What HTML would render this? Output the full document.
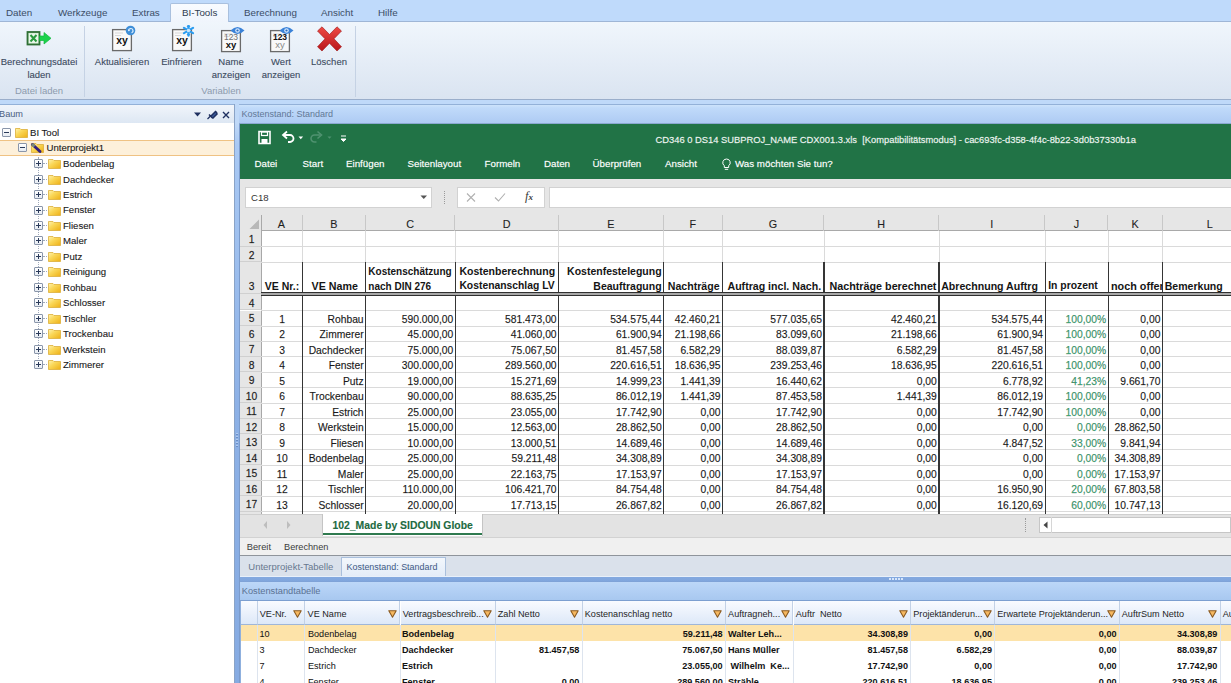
<!DOCTYPE html><html><head><meta charset="utf-8"><style>
*{box-sizing:border-box;margin:0;padding:0}
html,body{width:1231px;height:683px;overflow:hidden;background:#bfd9f9;font-family:"Liberation Sans",sans-serif;position:relative}
.a{position:absolute}
.t{position:absolute;white-space:nowrap;line-height:1}
#tabbar{left:0;top:0;width:1231px;height:22px;background:#bfdafb}
#tabbar .t{top:7.5px;font-size:9.8px;color:#3b4d66}
#seltab{left:170px;top:3px;width:59px;height:19px;background:linear-gradient(#f8fbff,#f0f5fc);border:1px solid #a9c0de;border-bottom:none;border-radius:2px 2px 0 0}
#ribbon{left:0;top:21px;width:1231px;height:79px;background:linear-gradient(#f0f6fc,#e4ecf6 55%,#dae4f1);border-top:1px solid #9fb6d6;border-bottom:1px solid #9aaecb}
.rl{position:absolute;font-size:9.5px;color:#3b4a5e;-webkit-text-stroke:0.2px rgba(59,74,94,0.5);text-align:center;white-space:nowrap;line-height:13px}
.gl{position:absolute;font-size:9.5px;color:#8d9bad;text-align:center;white-space:nowrap;line-height:1}
.vsep{position:absolute;width:1px;background:#c5d2e4;top:26px;height:71px}
.phdr{position:absolute;height:20px;border-top:1px solid #93b1d8;border-bottom:1px solid #8aa8d0}
.phdr .t{top:4.8px;font-size:9.2px}
#tree{left:0;top:123px;width:234px;height:560px;background:#fff}
.pm{position:absolute;width:9px;height:9px;border:1px solid #8a96aa;border-radius:1px;background:linear-gradient(#fff,#e6ebf2)}
.pm:before{content:"";position:absolute;left:1px;top:3px;width:5px;height:1px;background:#2a3a5a}
.pm.p:after{content:"";position:absolute;left:3px;top:1px;width:1px;height:5px;background:#2a3a5a}
.trt{position:absolute;white-space:nowrap;line-height:1;font-size:9.6px;color:#151515;-webkit-text-stroke:0.2px rgba(40,40,40,0.5)}
#xl{left:240px;top:124px;width:991px;height:55px;background:#217346}
#xl .t{color:#fff;-webkit-text-stroke:0.3px rgba(255,255,255,0.6)}
#fbar{left:240px;top:179px;width:991px;height:36px;background:#e6e6e6}
#grid{left:240px;top:215px;width:991px;height:299px;background:#fff;overflow:hidden}
.ch{position:absolute;top:0;height:16px;border-right:1px solid #c8c8c8;font-size:10.8px;color:#1e1e1e;-webkit-text-stroke:0.2px rgba(30,30,30,0.5);text-align:center;line-height:19px}
.rh{position:absolute;left:0;width:21.8px;background:#e6e6e6;border-right:1px solid #a8a8a8;border-bottom:1px solid #d0d0d0}
.gv{position:absolute;width:1px;background:#dadada}
.gh{position:absolute;height:1px;background:#dadada}
.tk{position:absolute;width:1.25px;background:#353535}
.c{position:absolute;white-space:nowrap;font-size:10.3px;color:#151515;line-height:1;-webkit-text-stroke:0.25px rgba(40,40,40,0.5)}
.hb{position:absolute;white-space:nowrap;font-size:10.8px;font-weight:bold;color:#151515;line-height:1}
#sheettabs{left:240px;top:514px;width:991px;height:24px;background:#e3e3e3;border-top:1px solid #cfcfcf;border-bottom:1px solid #d2d2d2}
#status{left:240px;top:538px;width:991px;height:18px;background:#f0f0f0;border-bottom:1px solid #8f949b}
#doctabs{left:240px;top:556px;width:991px;height:20px;background:#dae1eb}
#band2{left:240px;top:576px;width:991px;height:6px;background:linear-gradient(#e8f0fa 0,#e8f0fa 0.6px,#84a9df 1px,#80a6dd 5px,#7d9fd2 6px)}
#ktab{left:240px;top:582px;width:991px;height:19px;background:linear-gradient(#bcd7f8,#a8c8f0);border-bottom:1px solid #7c9fd0}
#bgrid{left:240px;top:601px;width:991px;height:82px;background:#fff;overflow:hidden}
.bh{position:absolute;top:0;height:24px;background:linear-gradient(#f9fbff,#dde8f8);border-right:1px solid #c2d1e6;border-bottom:1px solid #9fb6d8;font-size:9.1px;color:#1e1e1e}
.bc{position:absolute;white-space:nowrap;font-size:9.1px;color:#111;line-height:1}
</style></head><body>
<div id="tabbar" class="a">
<div class="t" style="left:6px">Daten</div>
<div class="t" style="left:58px">Werkzeuge</div>
<div class="t" style="left:132px">Extras</div>
<div class="t" style="left:244px">Berechnung</div>
<div class="t" style="left:321px">Ansicht</div>
<div class="t" style="left:378px">Hilfe</div>
</div>
<div id="ribbon" class="a"></div>
<div id="seltab" class="a"></div><div class="t" style="left:182px;top:7.5px;font-size:9.8px;color:#2f3d50">BI-Tools</div>
<div class="vsep" style="left:84px"></div><div class="vsep" style="left:355px"></div>
<div class="rl" style="left:-6.0px;top:54.5px;width:90px">Berechnungsdatei<br>laden</div>
<div class="rl" style="left:77.0px;top:54.5px;width:90px">Aktualisieren</div>
<div class="rl" style="left:136.5px;top:54.5px;width:90px">Einfrieren</div>
<div class="rl" style="left:186.0px;top:54.5px;width:90px">Name<br>anzeigen</div>
<div class="rl" style="left:236.0px;top:54.5px;width:90px">Wert<br>anzeigen</div>
<div class="rl" style="left:284.0px;top:54.5px;width:90px">Löschen</div>
<div class="gl" style="left:0;top:85.5px;width:78px">Datei laden</div>
<div class="gl" style="left:180px;top:85.5px;width:82px">Variablen</div>
<svg class="a" style="left:26px;top:31px" width="27" height="15" viewBox="0 0 27 15">
<rect x="1.5" y="1" width="12" height="12.5" fill="#c9e9c9" stroke="#2f6f35" stroke-width="1.8"/>
<rect x="3" y="2.5" width="9" height="9.5" fill="#e9f6ea"/>
<path d="M4.5 4 L10.5 10.5 M10.5 4 L4.5 10.5" stroke="#2a9a3e" stroke-width="2"/>
<path d="M13.5 5 H18 V1.5 L25 7.3 L18 13 V9.5 H13.5 Z" fill="#1bd24b" stroke="#12b83c" stroke-width="0.7"/>
</svg>
<svg class="a" style="left:111px;top:25px" width="26" height="27" viewBox="0 0 26 27"><rect x="1.6" y="4.6" width="18.8" height="21" fill="#f9f9f9" stroke="#6a6a6a" stroke-width="1.3"/><path d="M4 8h8M4 10.5h6" stroke="#cfcfcf" stroke-width="0.8"/><text x="11" y="18.5" font-family="Liberation Sans" font-weight="bold" font-size="10.5" text-anchor="middle" fill="#111">xy</text><circle cx="19.5" cy="5.5" r="4.8" fill="#3f8fd8"/><path d="M17.6 6 a2.2 2.2 0 1 1 2.9 1.8" stroke="#d8ecfd" stroke-width="1.2" fill="none"/><path d="M16.8 4.8 l1 1.6 l1.4 -1.2z" fill="#d8ecfd"/></svg>
<svg class="a" style="left:171px;top:25px" width="26" height="27" viewBox="0 0 26 27"><rect x="1.6" y="4.6" width="18.8" height="21" fill="#f9f9f9" stroke="#6a6a6a" stroke-width="1.3"/><path d="M4 8h8M4 10.5h6" stroke="#cfcfcf" stroke-width="0.8"/><text x="11" y="18.5" font-family="Liberation Sans" font-weight="bold" font-size="10.5" text-anchor="middle" fill="#111">xy</text><g stroke="#2a9cf0" stroke-width="2.2" stroke-linecap="round"><path d="M17.5 0.3v10.4M13 2.9l9 5.2M13 8.1l9-5.2"/></g><g stroke="#2a9cf0" stroke-width="1.2" fill="none"><path d="M16 0.8 l1.5 1.5 l1.5 -1.5M16 10.2 l1.5 -1.5 l1.5 1.5"/></g><circle cx="17.5" cy="5.5" r="1.8" fill="#c8e8fe"/></svg>
<svg class="a" style="left:220px;top:25.5px" width="26" height="27" viewBox="0 0 26 27"><rect x="1.6" y="4.6" width="18.8" height="21" fill="#f9f9f9" stroke="#6a6a6a" stroke-width="1.3"/><path d="M4 8h8M4 10.5h6" stroke="#cfcfcf" stroke-width="0.8"/><text x="11" y="14" font-family="Liberation Sans" font-size="8.5" text-anchor="middle" fill="#6f6f6f">123</text><text x="11" y="21.5" font-family="Liberation Sans" font-weight="bold" font-size="9.5" text-anchor="middle" fill="#111">xy</text><path d="M10.5 4.5 Q17.5 -2.5 24.5 4.5 Q17.5 11.5 10.5 4.5Z" fill="#3a82d8"/><circle cx="17.5" cy="4.5" r="2.3" fill="#d4e7fc"/><circle cx="17.5" cy="4.5" r="1.1" fill="#2a6cc0"/></svg>
<svg class="a" style="left:269px;top:25.5px" width="26" height="27" viewBox="0 0 26 27"><rect x="1.6" y="4.6" width="18.8" height="21" fill="#f9f9f9" stroke="#6a6a6a" stroke-width="1.3"/><path d="M4 8h8M4 10.5h6" stroke="#cfcfcf" stroke-width="0.8"/><text x="11" y="14" font-family="Liberation Sans" font-weight="bold" font-size="8.5" text-anchor="middle" fill="#111">123</text><text x="11" y="21.5" font-family="Liberation Sans" font-size="9.5" text-anchor="middle" fill="#8a8a8a">xy</text><path d="M10.5 4.5 Q17.5 -2.5 24.5 4.5 Q17.5 11.5 10.5 4.5Z" fill="#3a82d8"/><circle cx="17.5" cy="4.5" r="2.3" fill="#d4e7fc"/><circle cx="17.5" cy="4.5" r="1.1" fill="#2a6cc0"/></svg>
<svg class="a" style="left:316px;top:26px" width="27" height="26" viewBox="0 0 27 26">
<defs><linearGradient id="rg" x1="0" y1="0" x2="0" y2="1"><stop offset="0" stop-color="#ee4a44"/><stop offset="1" stop-color="#b8161a"/></linearGradient></defs>
<path d="M1.5 5 L6 0.8 L13.5 8.5 L21 0.8 L25.5 5 L18 12.8 L25.5 20.8 L21 25 L13.5 17.2 L6 25 L1.5 20.8 L9 12.8 Z" fill="url(#rg)" stroke="#9c1518" stroke-width="0.6"/>
</svg>
<div class="phdr" style="left:0;top:104px;width:234px;background:linear-gradient(#f1f5fb,#dde7f3)"><div class="t" style="left:-1px;color:#4a6080">Baum</div></div>
<svg class="a" style="left:193px;top:110px" width="40" height="10" viewBox="0 0 40 10"><path d="M1 2.5 H8 L4.5 6.5Z" fill="#1f3060"/><path d="M14.5 9 L17.5 6" stroke="#1f3060" stroke-width="1.3"/><path d="M16 4.5 L19.5 8 M17.5 6.5 L20.5 3.5 L22.5 1.5 L23.5 2.5 L24 4 L22 6 L19.5 8.5" stroke="#1f3060" stroke-width="1.5" fill="#3a5a9a"/><path d="M30 2 L36 8 M36 2 L30 8" stroke="#1f3060" stroke-width="1.4"/></svg>
<div id="tree" class="a"></div>
<div class="a" style="left:234px;top:104px;width:6px;height:579px;background:linear-gradient(#c0d9f8 0px,#c0d9f8 19px,#a9c9f4 40px,#8db1e6 300px,#86abe2 579px);border-left:1px solid #8aa3c6;border-right:1px solid #7b9bcb"></div>
<div class="pm a" style="left:2px;top:128px"></div>
<svg class="a" style="left:15px;top:127px" width="13" height="11" viewBox="0 0 13 11"><defs><linearGradient id="fg" x1="0" y1="0" x2="1" y2="1"><stop offset="0" stop-color="#fff3b0"/><stop offset="0.4" stop-color="#fad85a"/><stop offset="1" stop-color="#eeb015"/></linearGradient></defs><path d="M0.5 1.5 H5 L6 2.5 H12.5 V10.5 H0.5Z" fill="url(#fg)" stroke="#dcae3a" stroke-width="0.8"/></svg>
<div class="trt" style="left:30px;top:128px">BI Tool</div>
<div class="a" style="left:0;top:140px;width:234px;height:16px;background:#fdf0da;border-top:1px solid #efc283;border-bottom:1px solid #efc283"></div>
<div class="pm a" style="left:18px;top:143px"></div>
<svg class="a" style="left:31px;top:142px" width="13" height="11" viewBox="0 0 13 11"><defs><linearGradient id="fg" x1="0" y1="0" x2="1" y2="1"><stop offset="0" stop-color="#fff3b0"/><stop offset="0.4" stop-color="#fad85a"/><stop offset="1" stop-color="#eeb015"/></linearGradient></defs><path d="M0.5 1.5 H5 L6 2.5 H12.5 V10.5 H0.5Z" fill="url(#fg)" stroke="#dcae3a" stroke-width="0.8"/></svg>
<svg class="a" style="left:30px;top:142px" width="14" height="13"><path d="M2.5 2.5 L10 9.5" stroke="#34207e" stroke-width="3" stroke-linecap="round"/><path d="M2 2 L4.5 4.3" stroke="#7a8a7a" stroke-width="3"/></svg>
<div class="trt" style="left:46.5px;top:143px">Unterprojekt1</div>
<div class="a" style="left:38px;top:157px;width:0;height:204px;border-left:1px dotted #a0aabb"></div>
<div class="pm p a" style="left:34px;top:159px"></div>
<div class="a" style="left:43px;top:163px;width:4px;border-top:1px dotted #a0aabb"></div>
<svg class="a" style="left:47.5px;top:157.5px" width="13" height="11" viewBox="0 0 13 11"><defs><linearGradient id="fg" x1="0" y1="0" x2="1" y2="1"><stop offset="0" stop-color="#fff3b0"/><stop offset="0.4" stop-color="#fad85a"/><stop offset="1" stop-color="#eeb015"/></linearGradient></defs><path d="M0.5 1.5 H5 L6 2.5 H12.5 V10.5 H0.5Z" fill="url(#fg)" stroke="#dcae3a" stroke-width="0.8"/></svg>
<div class="trt" style="left:63px;top:159.1px">Bodenbelag</div>
<div class="pm p a" style="left:34px;top:175px"></div>
<div class="a" style="left:43px;top:179px;width:4px;border-top:1px dotted #a0aabb"></div>
<svg class="a" style="left:47.5px;top:173.5px" width="13" height="11" viewBox="0 0 13 11"><defs><linearGradient id="fg" x1="0" y1="0" x2="1" y2="1"><stop offset="0" stop-color="#fff3b0"/><stop offset="0.4" stop-color="#fad85a"/><stop offset="1" stop-color="#eeb015"/></linearGradient></defs><path d="M0.5 1.5 H5 L6 2.5 H12.5 V10.5 H0.5Z" fill="url(#fg)" stroke="#dcae3a" stroke-width="0.8"/></svg>
<div class="trt" style="left:63px;top:174.5px">Dachdecker</div>
<div class="pm p a" style="left:34px;top:190px"></div>
<div class="a" style="left:43px;top:194px;width:4px;border-top:1px dotted #a0aabb"></div>
<svg class="a" style="left:47.5px;top:188.5px" width="13" height="11" viewBox="0 0 13 11"><defs><linearGradient id="fg" x1="0" y1="0" x2="1" y2="1"><stop offset="0" stop-color="#fff3b0"/><stop offset="0.4" stop-color="#fad85a"/><stop offset="1" stop-color="#eeb015"/></linearGradient></defs><path d="M0.5 1.5 H5 L6 2.5 H12.5 V10.5 H0.5Z" fill="url(#fg)" stroke="#dcae3a" stroke-width="0.8"/></svg>
<div class="trt" style="left:63px;top:190.0px">Estrich</div>
<div class="pm p a" style="left:34px;top:206px"></div>
<div class="a" style="left:43px;top:210px;width:4px;border-top:1px dotted #a0aabb"></div>
<svg class="a" style="left:47.5px;top:204.5px" width="13" height="11" viewBox="0 0 13 11"><defs><linearGradient id="fg" x1="0" y1="0" x2="1" y2="1"><stop offset="0" stop-color="#fff3b0"/><stop offset="0.4" stop-color="#fad85a"/><stop offset="1" stop-color="#eeb015"/></linearGradient></defs><path d="M0.5 1.5 H5 L6 2.5 H12.5 V10.5 H0.5Z" fill="url(#fg)" stroke="#dcae3a" stroke-width="0.8"/></svg>
<div class="trt" style="left:63px;top:205.4px">Fenster</div>
<div class="pm p a" style="left:34px;top:221px"></div>
<div class="a" style="left:43px;top:225px;width:4px;border-top:1px dotted #a0aabb"></div>
<svg class="a" style="left:47.5px;top:219.5px" width="13" height="11" viewBox="0 0 13 11"><defs><linearGradient id="fg" x1="0" y1="0" x2="1" y2="1"><stop offset="0" stop-color="#fff3b0"/><stop offset="0.4" stop-color="#fad85a"/><stop offset="1" stop-color="#eeb015"/></linearGradient></defs><path d="M0.5 1.5 H5 L6 2.5 H12.5 V10.5 H0.5Z" fill="url(#fg)" stroke="#dcae3a" stroke-width="0.8"/></svg>
<div class="trt" style="left:63px;top:220.9px">Fliesen</div>
<div class="pm p a" style="left:34px;top:236px"></div>
<div class="a" style="left:43px;top:240px;width:4px;border-top:1px dotted #a0aabb"></div>
<svg class="a" style="left:47.5px;top:234.5px" width="13" height="11" viewBox="0 0 13 11"><defs><linearGradient id="fg" x1="0" y1="0" x2="1" y2="1"><stop offset="0" stop-color="#fff3b0"/><stop offset="0.4" stop-color="#fad85a"/><stop offset="1" stop-color="#eeb015"/></linearGradient></defs><path d="M0.5 1.5 H5 L6 2.5 H12.5 V10.5 H0.5Z" fill="url(#fg)" stroke="#dcae3a" stroke-width="0.8"/></svg>
<div class="trt" style="left:63px;top:236.3px">Maler</div>
<div class="pm p a" style="left:34px;top:252px"></div>
<div class="a" style="left:43px;top:256px;width:4px;border-top:1px dotted #a0aabb"></div>
<svg class="a" style="left:47.5px;top:250.5px" width="13" height="11" viewBox="0 0 13 11"><defs><linearGradient id="fg" x1="0" y1="0" x2="1" y2="1"><stop offset="0" stop-color="#fff3b0"/><stop offset="0.4" stop-color="#fad85a"/><stop offset="1" stop-color="#eeb015"/></linearGradient></defs><path d="M0.5 1.5 H5 L6 2.5 H12.5 V10.5 H0.5Z" fill="url(#fg)" stroke="#dcae3a" stroke-width="0.8"/></svg>
<div class="trt" style="left:63px;top:251.8px">Putz</div>
<div class="pm p a" style="left:34px;top:267px"></div>
<div class="a" style="left:43px;top:271px;width:4px;border-top:1px dotted #a0aabb"></div>
<svg class="a" style="left:47.5px;top:265.5px" width="13" height="11" viewBox="0 0 13 11"><defs><linearGradient id="fg" x1="0" y1="0" x2="1" y2="1"><stop offset="0" stop-color="#fff3b0"/><stop offset="0.4" stop-color="#fad85a"/><stop offset="1" stop-color="#eeb015"/></linearGradient></defs><path d="M0.5 1.5 H5 L6 2.5 H12.5 V10.5 H0.5Z" fill="url(#fg)" stroke="#dcae3a" stroke-width="0.8"/></svg>
<div class="trt" style="left:63px;top:267.2px">Reinigung</div>
<div class="pm p a" style="left:34px;top:283px"></div>
<div class="a" style="left:43px;top:287px;width:4px;border-top:1px dotted #a0aabb"></div>
<svg class="a" style="left:47.5px;top:281.5px" width="13" height="11" viewBox="0 0 13 11"><defs><linearGradient id="fg" x1="0" y1="0" x2="1" y2="1"><stop offset="0" stop-color="#fff3b0"/><stop offset="0.4" stop-color="#fad85a"/><stop offset="1" stop-color="#eeb015"/></linearGradient></defs><path d="M0.5 1.5 H5 L6 2.5 H12.5 V10.5 H0.5Z" fill="url(#fg)" stroke="#dcae3a" stroke-width="0.8"/></svg>
<div class="trt" style="left:63px;top:282.7px">Rohbau</div>
<div class="pm p a" style="left:34px;top:298px"></div>
<div class="a" style="left:43px;top:302px;width:4px;border-top:1px dotted #a0aabb"></div>
<svg class="a" style="left:47.5px;top:296.5px" width="13" height="11" viewBox="0 0 13 11"><defs><linearGradient id="fg" x1="0" y1="0" x2="1" y2="1"><stop offset="0" stop-color="#fff3b0"/><stop offset="0.4" stop-color="#fad85a"/><stop offset="1" stop-color="#eeb015"/></linearGradient></defs><path d="M0.5 1.5 H5 L6 2.5 H12.5 V10.5 H0.5Z" fill="url(#fg)" stroke="#dcae3a" stroke-width="0.8"/></svg>
<div class="trt" style="left:63px;top:298.1px">Schlosser</div>
<div class="pm p a" style="left:34px;top:314px"></div>
<div class="a" style="left:43px;top:318px;width:4px;border-top:1px dotted #a0aabb"></div>
<svg class="a" style="left:47.5px;top:312.5px" width="13" height="11" viewBox="0 0 13 11"><defs><linearGradient id="fg" x1="0" y1="0" x2="1" y2="1"><stop offset="0" stop-color="#fff3b0"/><stop offset="0.4" stop-color="#fad85a"/><stop offset="1" stop-color="#eeb015"/></linearGradient></defs><path d="M0.5 1.5 H5 L6 2.5 H12.5 V10.5 H0.5Z" fill="url(#fg)" stroke="#dcae3a" stroke-width="0.8"/></svg>
<div class="trt" style="left:63px;top:313.6px">Tischler</div>
<div class="pm p a" style="left:34px;top:329px"></div>
<div class="a" style="left:43px;top:333px;width:4px;border-top:1px dotted #a0aabb"></div>
<svg class="a" style="left:47.5px;top:327.5px" width="13" height="11" viewBox="0 0 13 11"><defs><linearGradient id="fg" x1="0" y1="0" x2="1" y2="1"><stop offset="0" stop-color="#fff3b0"/><stop offset="0.4" stop-color="#fad85a"/><stop offset="1" stop-color="#eeb015"/></linearGradient></defs><path d="M0.5 1.5 H5 L6 2.5 H12.5 V10.5 H0.5Z" fill="url(#fg)" stroke="#dcae3a" stroke-width="0.8"/></svg>
<div class="trt" style="left:63px;top:329.0px">Trockenbau</div>
<div class="pm p a" style="left:34px;top:345px"></div>
<div class="a" style="left:43px;top:349px;width:4px;border-top:1px dotted #a0aabb"></div>
<svg class="a" style="left:47.5px;top:343.5px" width="13" height="11" viewBox="0 0 13 11"><defs><linearGradient id="fg" x1="0" y1="0" x2="1" y2="1"><stop offset="0" stop-color="#fff3b0"/><stop offset="0.4" stop-color="#fad85a"/><stop offset="1" stop-color="#eeb015"/></linearGradient></defs><path d="M0.5 1.5 H5 L6 2.5 H12.5 V10.5 H0.5Z" fill="url(#fg)" stroke="#dcae3a" stroke-width="0.8"/></svg>
<div class="trt" style="left:63px;top:344.5px">Werkstein</div>
<div class="pm p a" style="left:34px;top:360px"></div>
<div class="a" style="left:43px;top:364px;width:4px;border-top:1px dotted #a0aabb"></div>
<svg class="a" style="left:47.5px;top:358.5px" width="13" height="11" viewBox="0 0 13 11"><defs><linearGradient id="fg" x1="0" y1="0" x2="1" y2="1"><stop offset="0" stop-color="#fff3b0"/><stop offset="0.4" stop-color="#fad85a"/><stop offset="1" stop-color="#eeb015"/></linearGradient></defs><path d="M0.5 1.5 H5 L6 2.5 H12.5 V10.5 H0.5Z" fill="url(#fg)" stroke="#dcae3a" stroke-width="0.8"/></svg>
<div class="trt" style="left:63px;top:359.9px">Zimmerer</div>
<div class="phdr" style="left:239px;top:104px;width:992px;background:linear-gradient(#cde3fb 0,#c0dafa 3px,#aecbf3)"><div class="t" style="left:2.5px;top:5px;font-size:9px;color:#627896">Kostenstand: Standard</div></div>
<div id="xl" class="a">
<div class="t" style="left:415.5px;top:11.5px;font-size:9.35px;color:#e6f0ea">CD346 0 DS14 SUBPROJ_NAME CDX001.3.xls&nbsp; [Kompatibilitätsmodus] - cac693fc-d358-4f4c-8b22-3d0b37330b1a</div>
<div class="t" style="left:14.5px;top:35px;font-size:9.75px">Datei</div>
<div class="t" style="left:62.5px;top:35px;font-size:9.75px">Start</div>
<div class="t" style="left:106px;top:35px;font-size:9.75px">Einfügen</div>
<div class="t" style="left:167.5px;top:35px;font-size:9.75px">Seitenlayout</div>
<div class="t" style="left:244.5px;top:35px;font-size:9.75px">Formeln</div>
<div class="t" style="left:304px;top:35px;font-size:9.75px">Daten</div>
<div class="t" style="left:352.5px;top:35px;font-size:9.75px">Überprüfen</div>
<div class="t" style="left:425px;top:35px;font-size:9.75px">Ansicht</div>
<div class="t" style="left:495px;top:35px;font-size:9.75px">Was möchten Sie tun?</div>
</div>
<svg class="a" style="left:256px;top:130px" width="100" height="16" viewBox="0 0 100 16">
<path d="M3 1.5 H14 V13.5 H3Z" fill="none" stroke="#fff" stroke-width="1.6"/>
<rect x="5.5" y="2" width="6" height="3.5" fill="none" stroke="#fff" stroke-width="1.2"/>
<rect x="5.5" y="9" width="6" height="4" fill="#fff"/>
<path d="M28 5 h6 a3.5 3.5 0 0 1 0 7 h-2" fill="none" stroke="#fff" stroke-width="1.8"/>
<path d="M31 1.5 L27 5 L31 8.5" fill="none" stroke="#fff" stroke-width="1.8"/>
<path d="M42.5 6.5 l2.3 2.8 l2.3 -2.8z" fill="#fff"/>
<path d="M64.5 5 h-6 a3.5 3.5 0 0 0 0 7 h2" fill="none" stroke="#4f9270" stroke-width="1.6"/>
<path d="M61.5 1.5 L65.5 5 L61.5 8.5" fill="none" stroke="#4f9270" stroke-width="1.6"/>
<path d="M71.5 6.5 l2 2.3 l2 -2.3z" fill="#4f9270"/>
<path d="M85 6 h5 M85 9 l2.5 2.5 l2.5 -2.5z" stroke="#fff" fill="#fff" stroke-width="1"/>
</svg>
<svg class="a" style="left:720.5px;top:157.5px" width="11" height="13" viewBox="0 0 11 13"><path d="M5.5 1 a3.7 3.7 0 0 1 2.2 6.7 v1.8 h-4.4 v-1.8 A3.7 3.7 0 0 1 5.5 1z M3.8 11.3 h3.4" fill="none" stroke="#fff" stroke-width="1"/></svg>
<div id="fbar" class="a"></div>
<div class="a" style="left:245px;top:187px;width:187px;height:21px;background:#fff;border:1px solid #d2d2d2"></div>
<div class="t" style="left:251px;top:193px;font-size:9.6px;color:#333">C18</div>
<svg class="a" style="left:420px;top:195px" width="8" height="5"><path d="M0.5 0.5 H7 L3.75 4Z" fill="#555"/></svg>
<div class="a" style="left:444px;top:191px;width:1px;height:13px;border-left:1px dotted #9a9a9a"></div>
<div class="a" style="left:457px;top:187px;width:88px;height:21px;background:#fff;border:1px solid #d2d2d2"></div>
<svg class="a" style="left:465px;top:192px" width="70" height="11" viewBox="0 0 70 11"><path d="M2 1.5 L10 9.5 M10 1.5 L2 9.5" stroke="#b0b0b0" stroke-width="1.1"/><path d="M30 5.5 L33.5 9 L40 1.5" stroke="#b0b0b0" stroke-width="1.1" fill="none"/></svg>
<div class="t" style="left:525px;top:190px;font-size:12.5px;font-style:italic;font-family:'Liberation Serif';color:#3a3a3a">f<span style="font-size:9px;font-weight:bold">x</span></div>
<div class="a" style="left:549px;top:187px;width:690px;height:21px;background:#fff;border:1px solid #d2d2d2"></div>
<div id="grid" class="a">
<div class="a" style="left:0;top:0;width:991px;height:16px;background:#e6e6e6;border-bottom:1px solid #a9a9a9"></div>
<div class="a" style="left:0;top:0;width:21.8px;height:16px;background:#e6e6e6;border-right:1px solid #a9a9a9"></div><svg class="a" style="left:9px;top:4px" width="11" height="11"><path d="M10 0.5 L10 10 L0.5 10Z" fill="#b8b8b8"/></svg>
<div class="ch" style="left:21.0px;width:41.7px">A</div>
<div class="ch" style="left:62.7px;width:63.1px">B</div>
<div class="ch" style="left:125.8px;width:89.7px">C</div>
<div class="ch" style="left:215.5px;width:103.3px">D</div>
<div class="ch" style="left:318.8px;width:105.1px">E</div>
<div class="ch" style="left:423.9px;width:58.8px">F</div>
<div class="ch" style="left:482.7px;width:101.4px">G</div>
<div class="ch" style="left:584.1px;width:114.9px">H</div>
<div class="ch" style="left:699.0px;width:106.3px">I</div>
<div class="ch" style="left:805.3px;width:63.1px">J</div>
<div class="ch" style="left:868.4px;width:54.2px">K</div>
<div class="ch" style="left:922.6px;width:95.4px">L</div>
<div class="rh" style="top:16.0px;height:15.8px"><span class="t" style="left:1px;width:21px;text-align:center;bottom:0.5px;font-size:10.3px;color:#202020;-webkit-text-stroke:0.3px rgba(30,30,30,0.55)">1</span></div>
<div class="rh" style="top:31.8px;height:15.6px"><span class="t" style="left:1px;width:21px;text-align:center;bottom:0.5px;font-size:10.3px;color:#202020;-webkit-text-stroke:0.3px rgba(30,30,30,0.55)">2</span></div>
<div class="rh" style="top:47.4px;height:31.2px"><span class="t" style="left:1px;width:21px;text-align:center;bottom:0.5px;font-size:10.3px;color:#202020;-webkit-text-stroke:0.3px rgba(30,30,30,0.55)">3</span></div>
<div class="rh" style="top:78.6px;height:16.9px"><span class="t" style="left:1px;width:21px;text-align:center;bottom:0.5px;font-size:10.3px;color:#202020;-webkit-text-stroke:0.3px rgba(30,30,30,0.55)">4</span></div>
<div class="rh" style="top:95.5px;height:15.5px"><span class="t" style="left:1px;width:21px;text-align:center;bottom:0.5px;font-size:10.3px;color:#202020;-webkit-text-stroke:0.3px rgba(30,30,30,0.55)">5</span></div>
<div class="rh" style="top:111.0px;height:15.5px"><span class="t" style="left:1px;width:21px;text-align:center;bottom:0.5px;font-size:10.3px;color:#202020;-webkit-text-stroke:0.3px rgba(30,30,30,0.55)">6</span></div>
<div class="rh" style="top:126.5px;height:15.5px"><span class="t" style="left:1px;width:21px;text-align:center;bottom:0.5px;font-size:10.3px;color:#202020;-webkit-text-stroke:0.3px rgba(30,30,30,0.55)">7</span></div>
<div class="rh" style="top:141.9px;height:15.5px"><span class="t" style="left:1px;width:21px;text-align:center;bottom:0.5px;font-size:10.3px;color:#202020;-webkit-text-stroke:0.3px rgba(30,30,30,0.55)">8</span></div>
<div class="rh" style="top:157.4px;height:15.5px"><span class="t" style="left:1px;width:21px;text-align:center;bottom:0.5px;font-size:10.3px;color:#202020;-webkit-text-stroke:0.3px rgba(30,30,30,0.55)">9</span></div>
<div class="rh" style="top:172.9px;height:15.5px"><span class="t" style="left:1px;width:21px;text-align:center;bottom:0.5px;font-size:10.3px;color:#202020;-webkit-text-stroke:0.3px rgba(30,30,30,0.55)">10</span></div>
<div class="rh" style="top:188.4px;height:15.5px"><span class="t" style="left:1px;width:21px;text-align:center;bottom:0.5px;font-size:10.3px;color:#202020;-webkit-text-stroke:0.3px rgba(30,30,30,0.55)">11</span></div>
<div class="rh" style="top:203.9px;height:15.5px"><span class="t" style="left:1px;width:21px;text-align:center;bottom:0.5px;font-size:10.3px;color:#202020;-webkit-text-stroke:0.3px rgba(30,30,30,0.55)">12</span></div>
<div class="rh" style="top:219.3px;height:15.5px"><span class="t" style="left:1px;width:21px;text-align:center;bottom:0.5px;font-size:10.3px;color:#202020;-webkit-text-stroke:0.3px rgba(30,30,30,0.55)">13</span></div>
<div class="rh" style="top:234.8px;height:15.5px"><span class="t" style="left:1px;width:21px;text-align:center;bottom:0.5px;font-size:10.3px;color:#202020;-webkit-text-stroke:0.3px rgba(30,30,30,0.55)">14</span></div>
<div class="rh" style="top:250.3px;height:15.5px"><span class="t" style="left:1px;width:21px;text-align:center;bottom:0.5px;font-size:10.3px;color:#202020;-webkit-text-stroke:0.3px rgba(30,30,30,0.55)">15</span></div>
<div class="rh" style="top:265.8px;height:15.5px"><span class="t" style="left:1px;width:21px;text-align:center;bottom:0.5px;font-size:10.3px;color:#202020;-webkit-text-stroke:0.3px rgba(30,30,30,0.55)">16</span></div>
<div class="rh" style="top:281.3px;height:15.5px"><span class="t" style="left:1px;width:21px;text-align:center;bottom:0.5px;font-size:10.3px;color:#202020;-webkit-text-stroke:0.3px rgba(30,30,30,0.55)">17</span></div>
<div class="rh" style="top:296.7px;height:15.5px"><span class="t" style="left:1px;width:21px;text-align:center;bottom:0.5px;font-size:10.3px;color:#202020;-webkit-text-stroke:0.3px rgba(30,30,30,0.55)"></span></div>
<div class="gv" style="left:62.2px;top:16px;height:283px"></div>
<div class="gv" style="left:125.3px;top:16px;height:283px"></div>
<div class="gv" style="left:215.0px;top:16px;height:283px"></div>
<div class="gv" style="left:318.3px;top:16px;height:283px"></div>
<div class="gv" style="left:423.4px;top:16px;height:283px"></div>
<div class="gv" style="left:482.2px;top:16px;height:283px"></div>
<div class="gv" style="left:583.6px;top:16px;height:283px"></div>
<div class="gv" style="left:698.5px;top:16px;height:283px"></div>
<div class="gv" style="left:804.8px;top:16px;height:283px"></div>
<div class="gv" style="left:867.9px;top:16px;height:283px"></div>
<div class="gv" style="left:922.1px;top:16px;height:283px"></div>
<div class="gv" style="left:1017.5px;top:16px;height:283px"></div>
<div class="gh" style="left:21px;top:31.3px;width:970px"></div>
<div class="gh" style="left:21px;top:46.9px;width:970px"></div>
<div class="gh" style="left:21px;top:78.1px;width:970px"></div>
<div class="gh" style="left:21px;top:95.0px;width:970px"></div>
<div class="gh" style="left:21px;top:110.5px;width:970px"></div>
<div class="gh" style="left:21px;top:126.0px;width:970px"></div>
<div class="gh" style="left:21px;top:141.4px;width:970px"></div>
<div class="gh" style="left:21px;top:156.9px;width:970px"></div>
<div class="gh" style="left:21px;top:172.4px;width:970px"></div>
<div class="gh" style="left:21px;top:187.9px;width:970px"></div>
<div class="gh" style="left:21px;top:203.4px;width:970px"></div>
<div class="gh" style="left:21px;top:218.8px;width:970px"></div>
<div class="gh" style="left:21px;top:234.3px;width:970px"></div>
<div class="gh" style="left:21px;top:249.8px;width:970px"></div>
<div class="gh" style="left:21px;top:265.3px;width:970px"></div>
<div class="gh" style="left:21px;top:280.8px;width:970px"></div>
<div class="gh" style="left:21px;top:296.2px;width:970px"></div>
<div class="gh" style="left:21px;top:311.7px;width:970px"></div>
<div class="tk" style="left:62.0px;top:47.4px;height:251.6px"></div>
<div class="tk" style="left:125.1px;top:47.4px;height:251.6px"></div>
<div class="tk" style="left:214.8px;top:47.4px;height:251.6px"></div>
<div class="tk" style="left:318.1px;top:47.4px;height:251.6px"></div>
<div class="tk" style="left:423.2px;top:47.4px;height:251.6px"></div>
<div class="tk" style="left:482.0px;top:47.4px;height:251.6px"></div>
<div class="tk" style="left:583.4px;top:47.4px;height:251.6px"></div>
<div class="tk" style="left:698.3px;top:47.4px;height:251.6px"></div>
<div class="tk" style="left:804.6px;top:47.4px;height:251.6px"></div>
<div class="tk" style="left:867.7px;top:47.4px;height:251.6px"></div>
<div class="tk" style="left:921.9px;top:47.4px;height:251.6px"></div>
<div class="a" style="left:21px;top:77.3px;width:970px;height:3.4px;border-top:1.2px solid #303030;border-bottom:1.2px solid #303030;background:#a8a8a8"></div>
<div class="hb" style="left:24.8px;top:66.3px;font-size:10.5px">VE Nr.:</div>
<div class="hb" style="left:71.5px;top:66.1px;font-size:10.7px">VE Name</div>
<div class="hb" style="left:128.3px;top:51.7px;font-size:10.0px">Kostenschätzung</div>
<div class="hb" style="left:128.3px;top:66.7px;font-size:10.0px">nach DIN 276</div>
<div class="hb" style="left:219.4px;top:51.3px;font-size:10.5px">Kostenberechnung</div>
<div class="hb" style="left:219.4px;top:66.4px;font-size:10.35px">Kostenanschlag LV</div>
<div class="hb" style="left:311.6px;width:110px;text-align:right;top:51.3px;font-size:10.5px">Kostenfestelegung</div>
<div class="hb" style="left:311.6px;width:110px;text-align:right;top:65.5px;font-size:10.5px">Beauftragung</div>
<div class="hb" style="left:427.8px;top:66.2px;font-size:10.6px">Nachträge</div>
<div class="hb" style="left:487.5px;top:66.2px;font-size:10.6px">Auftrag incl. Nach.</div>
<div class="hb" style="left:589.5px;top:66.0px;font-size:10.75px">Nachträge berechnet</div>
<div class="hb" style="left:701.2px;top:66.2px;font-size:10.6px">Abrechnung Auftrg</div>
<div class="hb" style="left:808.2px;top:66.4px;font-size:10.4px">In prozent</div>
<div class="a" style="left:869px;top:64px;width:53px;height:14px;overflow:hidden"><div class="hb" style="left:2px;top:2px">noch offen</div></div>
<div class="hb" style="left:924.7px;top:66.2px;font-size:10.55px">Bemerkung</div>
<div class="c" style="left:21px;width:42px;text-align:center;top:99.8px">1</div>
<div class="c" style="left:-16.2px;width:139.8px;text-align:right;top:99.8px;color:#151515">Rohbau</div>
<div class="c" style="left:73.5px;width:139.8px;text-align:right;top:99.8px;color:#151515">590.000,00</div>
<div class="c" style="left:176.8px;width:139.8px;text-align:right;top:99.8px;color:#151515">581.473,00</div>
<div class="c" style="left:281.9px;width:139.8px;text-align:right;top:99.8px;color:#151515">534.575,44</div>
<div class="c" style="left:340.7px;width:139.8px;text-align:right;top:99.8px;color:#151515">42.460,21</div>
<div class="c" style="left:442.1px;width:139.8px;text-align:right;top:99.8px;color:#151515">577.035,65</div>
<div class="c" style="left:557.0px;width:139.8px;text-align:right;top:99.8px;color:#151515">42.460,21</div>
<div class="c" style="left:663.3px;width:139.8px;text-align:right;top:99.8px;color:#151515">534.575,44</div>
<div class="c" style="left:726.4px;width:139.8px;text-align:right;top:99.8px;color:#38aa74">100,00%</div>
<div class="c" style="left:780.6px;width:139.8px;text-align:right;top:99.8px;color:#151515">0,00</div>
<div class="c" style="left:21px;width:42px;text-align:center;top:115.3px">2</div>
<div class="c" style="left:-16.2px;width:139.8px;text-align:right;top:115.3px;color:#151515">Zimmerer</div>
<div class="c" style="left:73.5px;width:139.8px;text-align:right;top:115.3px;color:#151515">45.000,00</div>
<div class="c" style="left:176.8px;width:139.8px;text-align:right;top:115.3px;color:#151515">41.060,00</div>
<div class="c" style="left:281.9px;width:139.8px;text-align:right;top:115.3px;color:#151515">61.900,94</div>
<div class="c" style="left:340.7px;width:139.8px;text-align:right;top:115.3px;color:#151515">21.198,66</div>
<div class="c" style="left:442.1px;width:139.8px;text-align:right;top:115.3px;color:#151515">83.099,60</div>
<div class="c" style="left:557.0px;width:139.8px;text-align:right;top:115.3px;color:#151515">21.198,66</div>
<div class="c" style="left:663.3px;width:139.8px;text-align:right;top:115.3px;color:#151515">61.900,94</div>
<div class="c" style="left:726.4px;width:139.8px;text-align:right;top:115.3px;color:#38aa74">100,00%</div>
<div class="c" style="left:780.6px;width:139.8px;text-align:right;top:115.3px;color:#151515">0,00</div>
<div class="c" style="left:21px;width:42px;text-align:center;top:130.7px">3</div>
<div class="c" style="left:-16.2px;width:139.8px;text-align:right;top:130.7px;color:#151515">Dachdecker</div>
<div class="c" style="left:73.5px;width:139.8px;text-align:right;top:130.7px;color:#151515">75.000,00</div>
<div class="c" style="left:176.8px;width:139.8px;text-align:right;top:130.7px;color:#151515">75.067,50</div>
<div class="c" style="left:281.9px;width:139.8px;text-align:right;top:130.7px;color:#151515">81.457,58</div>
<div class="c" style="left:340.7px;width:139.8px;text-align:right;top:130.7px;color:#151515">6.582,29</div>
<div class="c" style="left:442.1px;width:139.8px;text-align:right;top:130.7px;color:#151515">88.039,87</div>
<div class="c" style="left:557.0px;width:139.8px;text-align:right;top:130.7px;color:#151515">6.582,29</div>
<div class="c" style="left:663.3px;width:139.8px;text-align:right;top:130.7px;color:#151515">81.457,58</div>
<div class="c" style="left:726.4px;width:139.8px;text-align:right;top:130.7px;color:#38aa74">100,00%</div>
<div class="c" style="left:780.6px;width:139.8px;text-align:right;top:130.7px;color:#151515">0,00</div>
<div class="c" style="left:21px;width:42px;text-align:center;top:146.2px">4</div>
<div class="c" style="left:-16.2px;width:139.8px;text-align:right;top:146.2px;color:#151515">Fenster</div>
<div class="c" style="left:73.5px;width:139.8px;text-align:right;top:146.2px;color:#151515">300.000,00</div>
<div class="c" style="left:176.8px;width:139.8px;text-align:right;top:146.2px;color:#151515">289.560,00</div>
<div class="c" style="left:281.9px;width:139.8px;text-align:right;top:146.2px;color:#151515">220.616,51</div>
<div class="c" style="left:340.7px;width:139.8px;text-align:right;top:146.2px;color:#151515">18.636,95</div>
<div class="c" style="left:442.1px;width:139.8px;text-align:right;top:146.2px;color:#151515">239.253,46</div>
<div class="c" style="left:557.0px;width:139.8px;text-align:right;top:146.2px;color:#151515">18.636,95</div>
<div class="c" style="left:663.3px;width:139.8px;text-align:right;top:146.2px;color:#151515">220.616,51</div>
<div class="c" style="left:726.4px;width:139.8px;text-align:right;top:146.2px;color:#38aa74">100,00%</div>
<div class="c" style="left:780.6px;width:139.8px;text-align:right;top:146.2px;color:#151515">0,00</div>
<div class="c" style="left:21px;width:42px;text-align:center;top:161.7px">5</div>
<div class="c" style="left:-16.2px;width:139.8px;text-align:right;top:161.7px;color:#151515">Putz</div>
<div class="c" style="left:73.5px;width:139.8px;text-align:right;top:161.7px;color:#151515">19.000,00</div>
<div class="c" style="left:176.8px;width:139.8px;text-align:right;top:161.7px;color:#151515">15.271,69</div>
<div class="c" style="left:281.9px;width:139.8px;text-align:right;top:161.7px;color:#151515">14.999,23</div>
<div class="c" style="left:340.7px;width:139.8px;text-align:right;top:161.7px;color:#151515">1.441,39</div>
<div class="c" style="left:442.1px;width:139.8px;text-align:right;top:161.7px;color:#151515">16.440,62</div>
<div class="c" style="left:557.0px;width:139.8px;text-align:right;top:161.7px;color:#151515">0,00</div>
<div class="c" style="left:663.3px;width:139.8px;text-align:right;top:161.7px;color:#151515">6.778,92</div>
<div class="c" style="left:726.4px;width:139.8px;text-align:right;top:161.7px;color:#38aa74">41,23%</div>
<div class="c" style="left:780.6px;width:139.8px;text-align:right;top:161.7px;color:#151515">9.661,70</div>
<div class="c" style="left:21px;width:42px;text-align:center;top:177.2px">6</div>
<div class="c" style="left:-16.2px;width:139.8px;text-align:right;top:177.2px;color:#151515">Trockenbau</div>
<div class="c" style="left:73.5px;width:139.8px;text-align:right;top:177.2px;color:#151515">90.000,00</div>
<div class="c" style="left:176.8px;width:139.8px;text-align:right;top:177.2px;color:#151515">88.635,25</div>
<div class="c" style="left:281.9px;width:139.8px;text-align:right;top:177.2px;color:#151515">86.012,19</div>
<div class="c" style="left:340.7px;width:139.8px;text-align:right;top:177.2px;color:#151515">1.441,39</div>
<div class="c" style="left:442.1px;width:139.8px;text-align:right;top:177.2px;color:#151515">87.453,58</div>
<div class="c" style="left:557.0px;width:139.8px;text-align:right;top:177.2px;color:#151515">1.441,39</div>
<div class="c" style="left:663.3px;width:139.8px;text-align:right;top:177.2px;color:#151515">86.012,19</div>
<div class="c" style="left:726.4px;width:139.8px;text-align:right;top:177.2px;color:#38aa74">100,00%</div>
<div class="c" style="left:780.6px;width:139.8px;text-align:right;top:177.2px;color:#151515">0,00</div>
<div class="c" style="left:21px;width:42px;text-align:center;top:192.7px">7</div>
<div class="c" style="left:-16.2px;width:139.8px;text-align:right;top:192.7px;color:#151515">Estrich</div>
<div class="c" style="left:73.5px;width:139.8px;text-align:right;top:192.7px;color:#151515">25.000,00</div>
<div class="c" style="left:176.8px;width:139.8px;text-align:right;top:192.7px;color:#151515">23.055,00</div>
<div class="c" style="left:281.9px;width:139.8px;text-align:right;top:192.7px;color:#151515">17.742,90</div>
<div class="c" style="left:340.7px;width:139.8px;text-align:right;top:192.7px;color:#151515">0,00</div>
<div class="c" style="left:442.1px;width:139.8px;text-align:right;top:192.7px;color:#151515">17.742,90</div>
<div class="c" style="left:557.0px;width:139.8px;text-align:right;top:192.7px;color:#151515">0,00</div>
<div class="c" style="left:663.3px;width:139.8px;text-align:right;top:192.7px;color:#151515">17.742,90</div>
<div class="c" style="left:726.4px;width:139.8px;text-align:right;top:192.7px;color:#38aa74">100,00%</div>
<div class="c" style="left:780.6px;width:139.8px;text-align:right;top:192.7px;color:#151515">0,00</div>
<div class="c" style="left:21px;width:42px;text-align:center;top:208.1px">8</div>
<div class="c" style="left:-16.2px;width:139.8px;text-align:right;top:208.1px;color:#151515">Werkstein</div>
<div class="c" style="left:73.5px;width:139.8px;text-align:right;top:208.1px;color:#151515">15.000,00</div>
<div class="c" style="left:176.8px;width:139.8px;text-align:right;top:208.1px;color:#151515">12.563,00</div>
<div class="c" style="left:281.9px;width:139.8px;text-align:right;top:208.1px;color:#151515">28.862,50</div>
<div class="c" style="left:340.7px;width:139.8px;text-align:right;top:208.1px;color:#151515">0,00</div>
<div class="c" style="left:442.1px;width:139.8px;text-align:right;top:208.1px;color:#151515">28.862,50</div>
<div class="c" style="left:557.0px;width:139.8px;text-align:right;top:208.1px;color:#151515">0,00</div>
<div class="c" style="left:663.3px;width:139.8px;text-align:right;top:208.1px;color:#151515">0,00</div>
<div class="c" style="left:726.4px;width:139.8px;text-align:right;top:208.1px;color:#38aa74">0,00%</div>
<div class="c" style="left:780.6px;width:139.8px;text-align:right;top:208.1px;color:#151515">28.862,50</div>
<div class="c" style="left:21px;width:42px;text-align:center;top:223.6px">9</div>
<div class="c" style="left:-16.2px;width:139.8px;text-align:right;top:223.6px;color:#151515">Fliesen</div>
<div class="c" style="left:73.5px;width:139.8px;text-align:right;top:223.6px;color:#151515">10.000,00</div>
<div class="c" style="left:176.8px;width:139.8px;text-align:right;top:223.6px;color:#151515">13.000,51</div>
<div class="c" style="left:281.9px;width:139.8px;text-align:right;top:223.6px;color:#151515">14.689,46</div>
<div class="c" style="left:340.7px;width:139.8px;text-align:right;top:223.6px;color:#151515">0,00</div>
<div class="c" style="left:442.1px;width:139.8px;text-align:right;top:223.6px;color:#151515">14.689,46</div>
<div class="c" style="left:557.0px;width:139.8px;text-align:right;top:223.6px;color:#151515">0,00</div>
<div class="c" style="left:663.3px;width:139.8px;text-align:right;top:223.6px;color:#151515">4.847,52</div>
<div class="c" style="left:726.4px;width:139.8px;text-align:right;top:223.6px;color:#38aa74">33,00%</div>
<div class="c" style="left:780.6px;width:139.8px;text-align:right;top:223.6px;color:#151515">9.841,94</div>
<div class="c" style="left:21px;width:42px;text-align:center;top:239.1px">10</div>
<div class="c" style="left:-16.2px;width:139.8px;text-align:right;top:239.1px;color:#151515">Bodenbelag</div>
<div class="c" style="left:73.5px;width:139.8px;text-align:right;top:239.1px;color:#151515">25.000,00</div>
<div class="c" style="left:176.8px;width:139.8px;text-align:right;top:239.1px;color:#151515">59.211,48</div>
<div class="c" style="left:281.9px;width:139.8px;text-align:right;top:239.1px;color:#151515">34.308,89</div>
<div class="c" style="left:340.7px;width:139.8px;text-align:right;top:239.1px;color:#151515">0,00</div>
<div class="c" style="left:442.1px;width:139.8px;text-align:right;top:239.1px;color:#151515">34.308,89</div>
<div class="c" style="left:557.0px;width:139.8px;text-align:right;top:239.1px;color:#151515">0,00</div>
<div class="c" style="left:663.3px;width:139.8px;text-align:right;top:239.1px;color:#151515">0,00</div>
<div class="c" style="left:726.4px;width:139.8px;text-align:right;top:239.1px;color:#38aa74">0,00%</div>
<div class="c" style="left:780.6px;width:139.8px;text-align:right;top:239.1px;color:#151515">34.308,89</div>
<div class="c" style="left:21px;width:42px;text-align:center;top:254.6px">11</div>
<div class="c" style="left:-16.2px;width:139.8px;text-align:right;top:254.6px;color:#151515">Maler</div>
<div class="c" style="left:73.5px;width:139.8px;text-align:right;top:254.6px;color:#151515">25.000,00</div>
<div class="c" style="left:176.8px;width:139.8px;text-align:right;top:254.6px;color:#151515">22.163,75</div>
<div class="c" style="left:281.9px;width:139.8px;text-align:right;top:254.6px;color:#151515">17.153,97</div>
<div class="c" style="left:340.7px;width:139.8px;text-align:right;top:254.6px;color:#151515">0,00</div>
<div class="c" style="left:442.1px;width:139.8px;text-align:right;top:254.6px;color:#151515">17.153,97</div>
<div class="c" style="left:557.0px;width:139.8px;text-align:right;top:254.6px;color:#151515">0,00</div>
<div class="c" style="left:663.3px;width:139.8px;text-align:right;top:254.6px;color:#151515">0,00</div>
<div class="c" style="left:726.4px;width:139.8px;text-align:right;top:254.6px;color:#38aa74">0,00%</div>
<div class="c" style="left:780.6px;width:139.8px;text-align:right;top:254.6px;color:#151515">17.153,97</div>
<div class="c" style="left:21px;width:42px;text-align:center;top:270.1px">12</div>
<div class="c" style="left:-16.2px;width:139.8px;text-align:right;top:270.1px;color:#151515">Tischler</div>
<div class="c" style="left:73.5px;width:139.8px;text-align:right;top:270.1px;color:#151515">110.000,00</div>
<div class="c" style="left:176.8px;width:139.8px;text-align:right;top:270.1px;color:#151515">106.421,70</div>
<div class="c" style="left:281.9px;width:139.8px;text-align:right;top:270.1px;color:#151515">84.754,48</div>
<div class="c" style="left:340.7px;width:139.8px;text-align:right;top:270.1px;color:#151515">0,00</div>
<div class="c" style="left:442.1px;width:139.8px;text-align:right;top:270.1px;color:#151515">84.754,48</div>
<div class="c" style="left:557.0px;width:139.8px;text-align:right;top:270.1px;color:#151515">0,00</div>
<div class="c" style="left:663.3px;width:139.8px;text-align:right;top:270.1px;color:#151515">16.950,90</div>
<div class="c" style="left:726.4px;width:139.8px;text-align:right;top:270.1px;color:#38aa74">20,00%</div>
<div class="c" style="left:780.6px;width:139.8px;text-align:right;top:270.1px;color:#151515">67.803,58</div>
<div class="c" style="left:21px;width:42px;text-align:center;top:285.5px">13</div>
<div class="c" style="left:-16.2px;width:139.8px;text-align:right;top:285.5px;color:#151515">Schlosser</div>
<div class="c" style="left:73.5px;width:139.8px;text-align:right;top:285.5px;color:#151515">20.000,00</div>
<div class="c" style="left:176.8px;width:139.8px;text-align:right;top:285.5px;color:#151515">17.713,15</div>
<div class="c" style="left:281.9px;width:139.8px;text-align:right;top:285.5px;color:#151515">26.867,82</div>
<div class="c" style="left:340.7px;width:139.8px;text-align:right;top:285.5px;color:#151515">0,00</div>
<div class="c" style="left:442.1px;width:139.8px;text-align:right;top:285.5px;color:#151515">26.867,82</div>
<div class="c" style="left:557.0px;width:139.8px;text-align:right;top:285.5px;color:#151515">0,00</div>
<div class="c" style="left:663.3px;width:139.8px;text-align:right;top:285.5px;color:#151515">16.120,69</div>
<div class="c" style="left:726.4px;width:139.8px;text-align:right;top:285.5px;color:#38aa74">60,00%</div>
<div class="c" style="left:780.6px;width:139.8px;text-align:right;top:285.5px;color:#151515">10.747,13</div>
</div>
<div id="sheettabs" class="a"></div>
<svg class="a" style="left:262px;top:520px" width="30" height="10"><path d="M5 1 L1.5 5 L5 9Z" fill="#bdbdbd"/><path d="M25 1 L28.5 5 L25 9Z" fill="#bdbdbd"/></svg>
<div class="a" style="left:322px;top:514px;width:161px;height:22px;background:#fff;border-left:1px solid #c4c4c4;border-right:1px solid #c4c4c4"></div>
<div class="a" style="left:323px;top:532.5px;width:159px;height:2px;background:#2f7a4f"></div>
<div class="t" style="left:332.5px;top:520.5px;font-size:10.4px;font-weight:bold;color:#226b42;-webkit-text-stroke:0.2px rgba(34,107,66,0.6)">102_Made by SIDOUN Globe</div>
<div class="a" style="left:1025px;top:518px;width:1px;height:14px;border-left:1px dotted #9a9a9a"></div>
<div class="a" style="left:1039px;top:517px;width:192px;height:16px;background:#fff;border:1px solid #c6c6c6"></div>
<div class="a" style="left:1039px;top:517px;width:13px;height:16px;border-right:1px solid #d6d6d6"></div>
<svg class="a" style="left:1042px;top:521px" width="8" height="8"><path d="M5.5 0.5 L1.5 4 L5.5 7.5Z" fill="#444"/></svg>
<div id="status" class="a"><div class="t" style="left:6.7px;top:5px;font-size:9.3px;color:#3c3c3c">Bereit</div><div class="t" style="left:44px;top:5px;font-size:9.2px;color:#3c3c3c">Berechnen</div></div>
<div id="doctabs" class="a"><div class="t" style="left:8.3px;top:6px;font-size:9.5px;color:#67788f">Unterprojekt-Tabelle</div></div>
<div class="a" style="left:341px;top:557px;width:105px;height:19px;background:linear-gradient(#f3f7fc,#e3ecf8);border:1px solid #a9bfdc;border-bottom:none"></div>
<div class="t" style="left:346.5px;top:563px;font-size:8.95px;color:#3d5a85">Kostenstand: Standard</div>
<div id="band2" class="a"></div>
<div class="a" style="left:236px;top:433px;width:2px;height:14px;background:repeating-linear-gradient(180deg,#b2cbef 0 1.5px,#6d90c6 1.5px 2.5px,transparent 2.5px 3px)"></div>
<div class="a" style="left:889px;top:577.5px;width:14px;height:2px;background:repeating-linear-gradient(90deg,#d6e6fb 0 2px,transparent 2px 3px)"></div>
<div id="ktab" class="a"><div class="t" style="left:1.8px;top:4.5px;font-size:9.25px;color:#5b7293">Kostenstandtabelle</div></div>
<div id="bgrid" class="a">
<div class="bh" style="left:1.0px;width:16.5px"><span class="t" style="left:2.3px;top:8.5px"></span></div>
<div class="bh" style="left:17.5px;width:47.8px"><span class="t" style="left:2.3px;top:8.5px">VE-Nr.</span><svg class="a" style="right:2.5px;top:8.5px" width="9" height="8"><path d="M0.8 0.8 H8.2 L4.5 7.2 Z" fill="#f6b860" stroke="#8a5a20" stroke-width="1.1" stroke-linejoin="round"/></svg></div>
<div class="bh" style="left:65.3px;width:95.2px"><span class="t" style="left:2.3px;top:8.5px">VE Name</span><svg class="a" style="right:2.5px;top:8.5px" width="9" height="8"><path d="M0.8 0.8 H8.2 L4.5 7.2 Z" fill="#f6b860" stroke="#8a5a20" stroke-width="1.1" stroke-linejoin="round"/></svg></div>
<div class="bh" style="left:160.5px;width:95.0px"><span class="t" style="left:2.3px;top:8.5px">Vertragsbeschreib...</span><svg class="a" style="right:2.5px;top:8.5px" width="9" height="8"><path d="M0.8 0.8 H8.2 L4.5 7.2 Z" fill="#f6b860" stroke="#8a5a20" stroke-width="1.1" stroke-linejoin="round"/></svg></div>
<div class="bh" style="left:255.5px;width:87.0px"><span class="t" style="left:2.3px;top:8.5px">Zahl Netto</span><svg class="a" style="right:2.5px;top:8.5px" width="9" height="8"><path d="M0.8 0.8 H8.2 L4.5 7.2 Z" fill="#f6b860" stroke="#8a5a20" stroke-width="1.1" stroke-linejoin="round"/></svg></div>
<div class="bh" style="left:342.5px;width:143.3px"><span class="t" style="left:2.3px;top:8.5px">Kostenanschlag netto</span><svg class="a" style="right:2.5px;top:8.5px" width="9" height="8"><path d="M0.8 0.8 H8.2 L4.5 7.2 Z" fill="#f6b860" stroke="#8a5a20" stroke-width="1.1" stroke-linejoin="round"/></svg></div>
<div class="bh" style="left:485.8px;width:67.7px"><span class="t" style="left:2.3px;top:8.5px">Auftragneh...</span><svg class="a" style="right:2.5px;top:8.5px" width="9" height="8"><path d="M0.8 0.8 H8.2 L4.5 7.2 Z" fill="#f6b860" stroke="#8a5a20" stroke-width="1.1" stroke-linejoin="round"/></svg></div>
<div class="bh" style="left:553.5px;width:117.5px"><span class="t" style="left:2.3px;top:8.5px">Auftr&nbsp; Netto</span><svg class="a" style="right:2.5px;top:8.5px" width="9" height="8"><path d="M0.8 0.8 H8.2 L4.5 7.2 Z" fill="#f6b860" stroke="#8a5a20" stroke-width="1.1" stroke-linejoin="round"/></svg></div>
<div class="bh" style="left:671.0px;width:84.0px"><span class="t" style="left:2.3px;top:8.5px">Projektänderun...</span><svg class="a" style="right:2.5px;top:8.5px" width="9" height="8"><path d="M0.8 0.8 H8.2 L4.5 7.2 Z" fill="#f6b860" stroke="#8a5a20" stroke-width="1.1" stroke-linejoin="round"/></svg></div>
<div class="bh" style="left:755.0px;width:124.5px"><span class="t" style="left:2.3px;top:8.5px">Erwartete Projektänderun...</span><svg class="a" style="right:2.5px;top:8.5px" width="9" height="8"><path d="M0.8 0.8 H8.2 L4.5 7.2 Z" fill="#f6b860" stroke="#8a5a20" stroke-width="1.1" stroke-linejoin="round"/></svg></div>
<div class="bh" style="left:879.5px;width:101.0px"><span class="t" style="left:2.3px;top:8.5px">AuftrSum Netto</span><svg class="a" style="right:2.5px;top:8.5px" width="9" height="8"><path d="M0.8 0.8 H8.2 L4.5 7.2 Z" fill="#f6b860" stroke="#8a5a20" stroke-width="1.1" stroke-linejoin="round"/></svg></div>
<div class="bh" style="left:980.5px;width:79.5px"><span class="t" style="left:2.3px;top:8.5px">Au</span></div>
<div class="a" style="left:0;top:0;width:1px;height:82px;background:#8fb0de"></div>
<div class="a" style="left:1px;top:24px;width:990px;height:16.5px;background:#fde3a9;border-bottom:1px solid #dde0e5"></div>
<div class="bc" style="left:19.5px;top:29px">10</div>
<div class="bc" style="left:68px;top:29px">Bodenbelag</div>
<div class="bc" style="left:162px;top:29px;font-weight:bold">Bodenbelag</div>
<div class="bc" style="left:189.4px;width:150px;text-align:right;top:29px;font-weight:bold"></div>
<div class="bc" style="left:332.7px;width:150px;text-align:right;top:29px;font-weight:bold">59.211,48</div>
<div class="bc" style="left:488px;top:29px;font-weight:bold">Walter Leh...</div>
<div class="bc" style="left:518.0px;width:150px;text-align:right;top:29px;font-weight:bold">34.308,89</div>
<div class="bc" style="left:602.0px;width:150px;text-align:right;top:29px;font-weight:bold">0,00</div>
<div class="bc" style="left:726.5px;width:150px;text-align:right;top:29px;font-weight:bold">0,00</div>
<div class="bc" style="left:827.4px;width:150px;text-align:right;top:29px;font-weight:bold">34.308,89</div>
<div class="a" style="left:1px;top:40px;width:990px;height:16.5px;background:#fff;border-bottom:1px solid #dde0e5"></div>
<div class="bc" style="left:19.5px;top:45px">3</div>
<div class="bc" style="left:68px;top:45px">Dachdecker</div>
<div class="bc" style="left:162px;top:45px;font-weight:bold">Dachdecker</div>
<div class="bc" style="left:189.4px;width:150px;text-align:right;top:45px;font-weight:bold">81.457,58</div>
<div class="bc" style="left:332.7px;width:150px;text-align:right;top:45px;font-weight:bold">75.067,50</div>
<div class="bc" style="left:488px;top:45px;font-weight:bold">Hans Müller</div>
<div class="bc" style="left:518.0px;width:150px;text-align:right;top:45px;font-weight:bold">81.457,58</div>
<div class="bc" style="left:602.0px;width:150px;text-align:right;top:45px;font-weight:bold">6.582,29</div>
<div class="bc" style="left:726.5px;width:150px;text-align:right;top:45px;font-weight:bold">0,00</div>
<div class="bc" style="left:827.4px;width:150px;text-align:right;top:45px;font-weight:bold">88.039,87</div>
<div class="a" style="left:1px;top:56px;width:990px;height:16.5px;background:#fff;border-bottom:1px solid #dde0e5"></div>
<div class="bc" style="left:19.5px;top:61px">7</div>
<div class="bc" style="left:68px;top:61px">Estrich</div>
<div class="bc" style="left:162px;top:61px;font-weight:bold">Estrich</div>
<div class="bc" style="left:189.4px;width:150px;text-align:right;top:61px;font-weight:bold"></div>
<div class="bc" style="left:332.7px;width:150px;text-align:right;top:61px;font-weight:bold">23.055,00</div>
<div class="bc" style="left:488px;top:61px;font-weight:bold">&nbsp;Wilhelm&nbsp; Ke...</div>
<div class="bc" style="left:518.0px;width:150px;text-align:right;top:61px;font-weight:bold">17.742,90</div>
<div class="bc" style="left:602.0px;width:150px;text-align:right;top:61px;font-weight:bold">0,00</div>
<div class="bc" style="left:726.5px;width:150px;text-align:right;top:61px;font-weight:bold">0,00</div>
<div class="bc" style="left:827.4px;width:150px;text-align:right;top:61px;font-weight:bold">17.742,90</div>
<div class="a" style="left:1px;top:72px;width:990px;height:16.5px;background:#fff;border-bottom:1px solid #dde0e5"></div>
<div class="bc" style="left:19.5px;top:77px">4</div>
<div class="bc" style="left:68px;top:77px">Fenster</div>
<div class="bc" style="left:162px;top:77px;font-weight:bold">Fenster</div>
<div class="bc" style="left:189.4px;width:150px;text-align:right;top:77px;font-weight:bold">0,00</div>
<div class="bc" style="left:332.7px;width:150px;text-align:right;top:77px;font-weight:bold">289.560,00</div>
<div class="bc" style="left:488px;top:77px;font-weight:bold">Sträble</div>
<div class="bc" style="left:518.0px;width:150px;text-align:right;top:77px;font-weight:bold">220.616,51</div>
<div class="bc" style="left:602.0px;width:150px;text-align:right;top:77px;font-weight:bold">18.636,95</div>
<div class="bc" style="left:726.5px;width:150px;text-align:right;top:77px;font-weight:bold">0,00</div>
<div class="bc" style="left:827.4px;width:150px;text-align:right;top:77px;font-weight:bold">239.253,46</div>
<div class="a" style="left:16.5px;top:24px;width:1px;height:58px;background:#dde4ee"></div>
<div class="a" style="left:64.3px;top:24px;width:1px;height:58px;background:#dde4ee"></div>
<div class="a" style="left:159.5px;top:24px;width:1px;height:58px;background:#dde4ee"></div>
<div class="a" style="left:254.5px;top:24px;width:1px;height:58px;background:#dde4ee"></div>
<div class="a" style="left:341.5px;top:24px;width:1px;height:58px;background:#dde4ee"></div>
<div class="a" style="left:484.8px;top:24px;width:1px;height:58px;background:#dde4ee"></div>
<div class="a" style="left:552.5px;top:24px;width:1px;height:58px;background:#dde4ee"></div>
<div class="a" style="left:670.0px;top:24px;width:1px;height:58px;background:#dde4ee"></div>
<div class="a" style="left:754.0px;top:24px;width:1px;height:58px;background:#dde4ee"></div>
<div class="a" style="left:878.5px;top:24px;width:1px;height:58px;background:#dde4ee"></div>
<div class="a" style="left:979.5px;top:24px;width:1px;height:58px;background:#dde4ee"></div>
<div class="a" style="left:1059.0px;top:24px;width:1px;height:58px;background:#dde4ee"></div>
</div>
</body></html>
